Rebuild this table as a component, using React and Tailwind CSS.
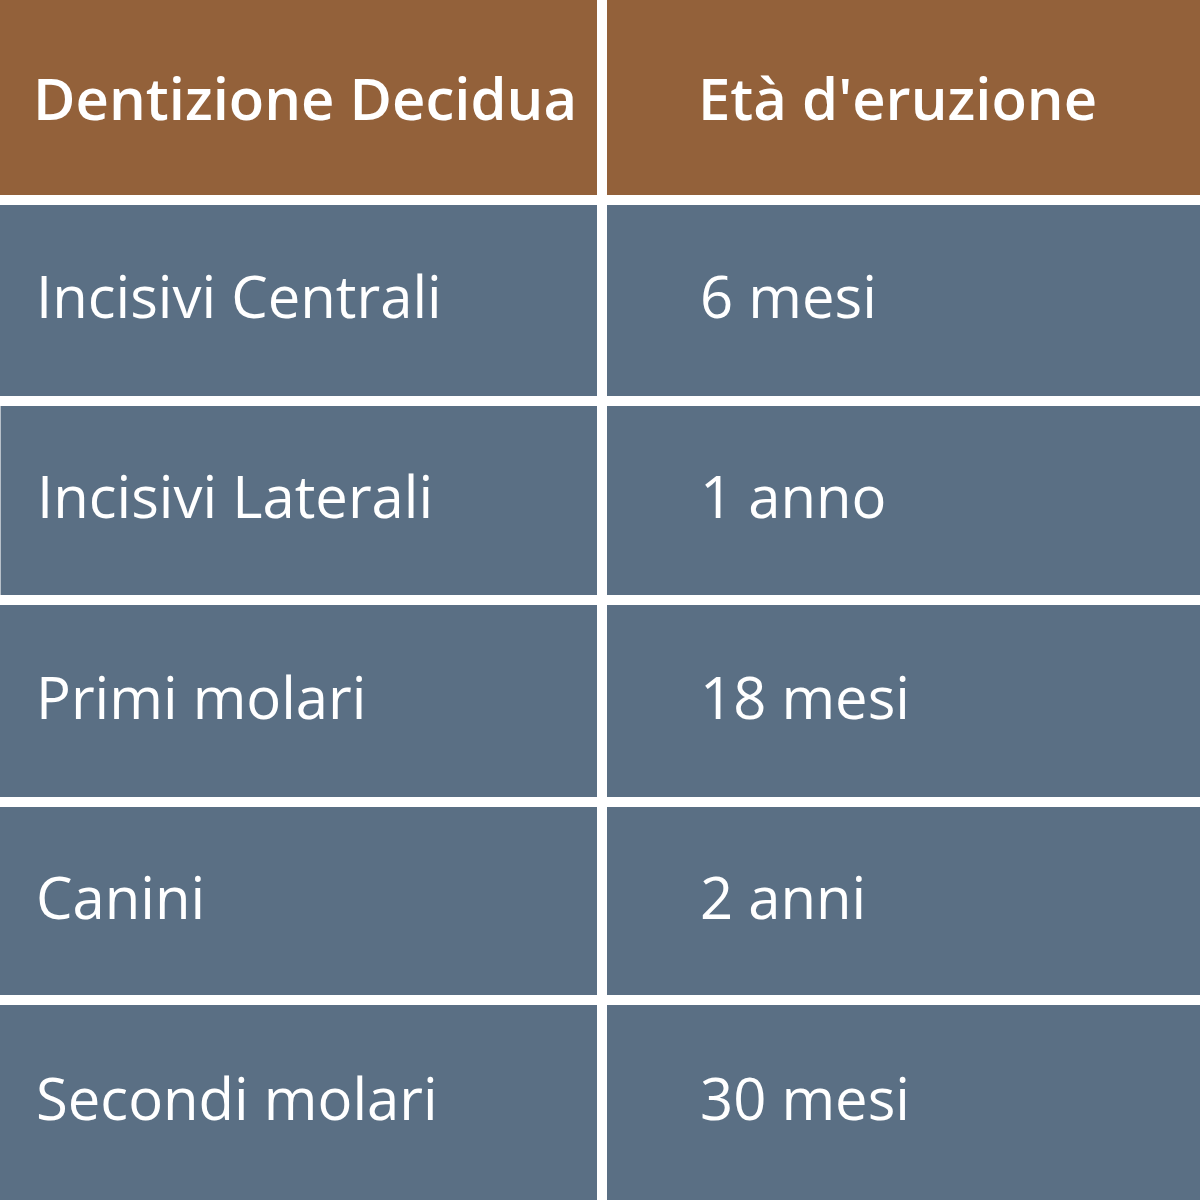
import React from "react";

const rows = [
  { name: "Incisivi Centrali", age: "6 mesi", h: "h-[191px]" },
  { name: "Incisivi Laterali", age: "1 anno", h: "h-[189px]", edge: true },
  { name: "Primi molari", age: "18 mesi", h: "h-[192px]" },
  { name: "Canini", age: "2 anni", h: "h-[188px]" },
  { name: "Secondi molari", age: "30 mesi", h: "h-[195px]" },
];

export default function App() {
  return (
    <div
      className="w-[1200px] h-[1200px] bg-white flex flex-col gap-[10px] text-white"
      style={{ fontFamily: '"Open Sans", "Noto Sans", sans-serif' }}
    >
      <div className="flex gap-[10px] h-[195px]">
        <div className="w-[597px] bg-[#93613a] flex items-center pl-[33px] text-[58px] font-semibold">
          Dentizione Decidua
        </div>
        <div className="flex-1 bg-[#93613a] flex items-center pl-[91px] text-[58px] font-semibold">
          Età d'eruzione
        </div>
      </div>
      {rows.map((r) => (
        <div key={r.name} className={`flex gap-[10px] ${r.h}`}>
          <div
            className={`w-[597px] bg-[#5a6f84] flex items-center pl-[36px] pb-[10px] text-[58px] ${
              r.edge ? "border-l border-[#b7c0c9]" : ""
            }`}
          >
            {r.name}
          </div>
          <div className="flex-1 bg-[#5a6f84] flex items-center pl-[93px] pb-[10px] text-[58px]">
            {r.age}
          </div>
        </div>
      ))}
    </div>
  );
}
